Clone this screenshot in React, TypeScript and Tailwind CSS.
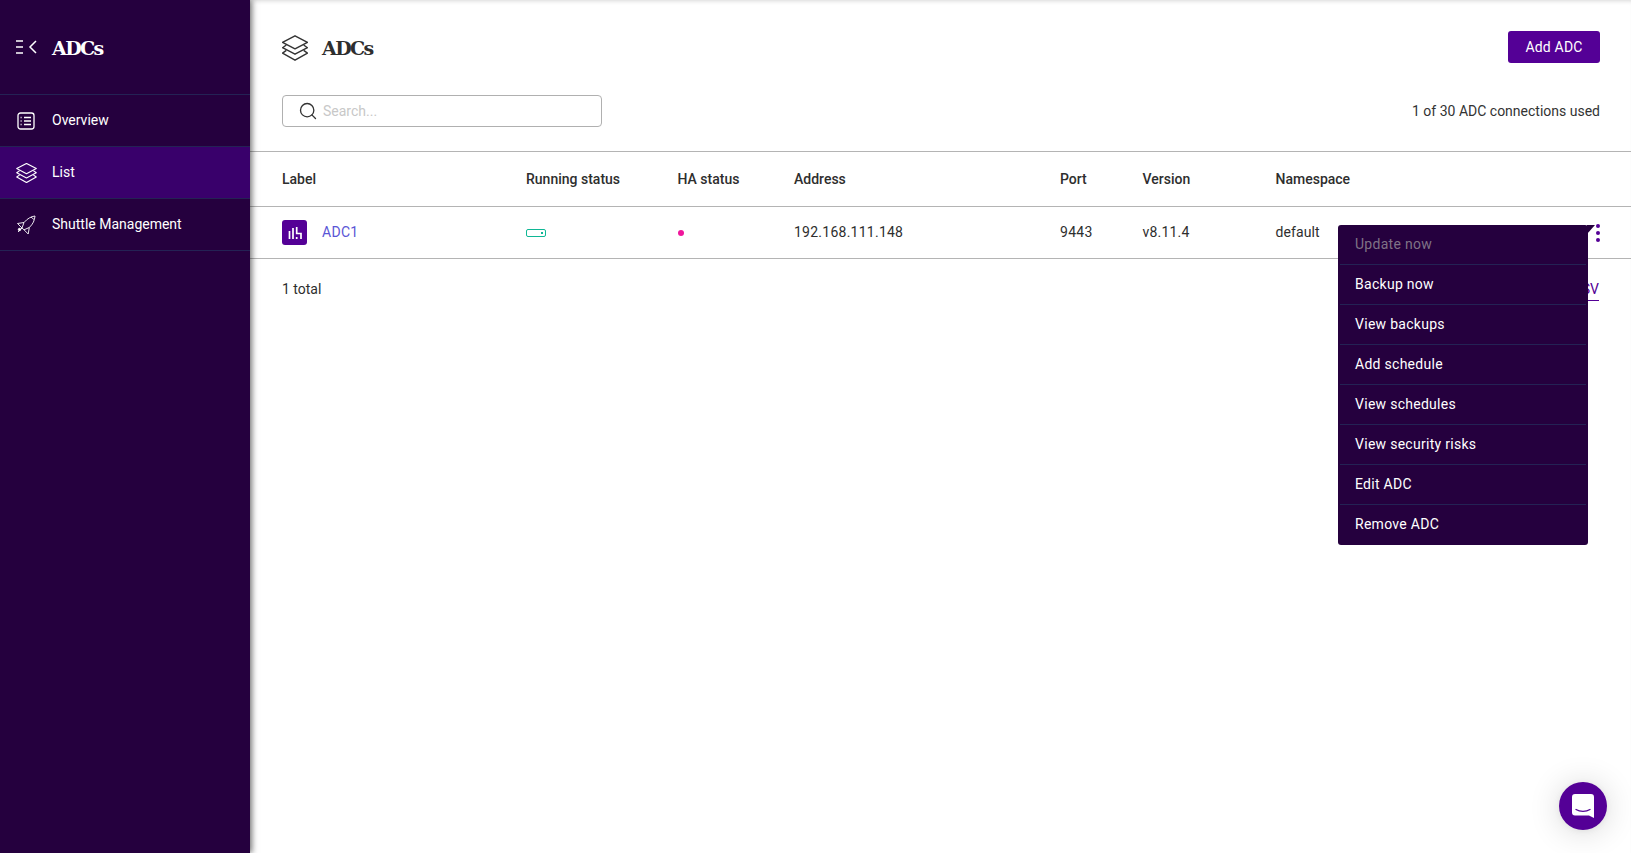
import { Search } from "lucide-react";

const NAV_BORDER = "border-b border-[#242254]";

const MENU_ITEMS = [
  "Update now",
  "Backup now",
  "View backups",
  "Add schedule",
  "View schedules",
  "View security risks",
  "Edit ADC",
  "Remove ADC",
];

function StackIcon({ className }: { className?: string }) {
  return (
    <svg viewBox="1 1 24 23.5" fill="none" stroke="currentColor" strokeWidth="1.3" strokeLinejoin="round" className={className}>
      <path d="M13 1.5 24.5 7.5 13 13.5 1.5 7.5Z" />
      <path d="M5 10 1.5 12.5 13 18.5 24.5 12.5 21 10" />
      <path d="M5 15 1.5 17.5 13 24 24.5 17.5 21 15" />
    </svg>
  );
}

function CollapseIcon() {
  return (
    <svg viewBox="0 0 22 14" fill="none" stroke="currentColor" className="h-[14px] w-[22px] text-white">
      <path d="M0 1h7M0 7h7M0 13h7" strokeWidth="1.4" />
      <path d="M20 1 14 7l6 6" strokeWidth="1.5" />
    </svg>
  );
}

function OverviewIcon() {
  return (
    <svg viewBox="0 0 18 18" fill="none" stroke="currentColor" strokeWidth="1.3" className="h-[18px] w-[18px] text-white">
      <rect x="1" y="1" width="16" height="16" rx="2.5" />
      <path d="M7 5.5h7M7 9h7M7 12.5h7" />
      <path d="M3.6 5.5h1M3.6 9h1M3.6 12.5h1" strokeWidth="1.4" />
    </svg>
  );
}

function ShuttleIcon() {
  return (
    <svg viewBox="0 0 20 20" fill="none" stroke="currentColor" strokeWidth="0.9" strokeLinejoin="round" className="h-[20px] w-[20px] text-white">
      <path d="M19 1C15 1.5 11.5 3.5 8 7.5L6 13l2 1.8 5.3-2.3C17 9 18.6 5.5 19 1Z" />
      <path d="M8 7.5 1.5 8.5 6 13" />
      <path d="M13.3 12.5 12.2 19 8 14.8" />
      <path d="M15 2 18 4.5" />
      <path d="M6 13 2 17" />
      <circle cx="3.5" cy="14.5" r="1.2" fill="currentColor" />
    </svg>
  );
}

function NavItem({ label, icon, active }: { label: string; icon: React.ReactNode; active?: boolean }) {
  return (
    <div className={`flex h-[52px] items-center ${NAV_BORDER} ${active ? "bg-[#39006b]" : ""}`}>
      <div className="flex w-[52px] justify-center">{icon}</div>
      <span className="text-[14px] text-white">{label}</span>
    </div>
  );
}

function Sidebar() {
  return (
    <aside className="relative z-10 h-[853px] w-[250px] shrink-0 bg-[#25003e] shadow-[2px_0_6px_rgba(0,0,0,0.55)]">
      <div className={`flex h-[95px] items-center ${NAV_BORDER}`}>
        <div className="flex w-[52px] justify-center pl-[1px]">
          <CollapseIcon />
        </div>
        <span className="pt-[2px] font-['DejaVu_Serif',serif] text-[19px] leading-none font-bold tracking-[-1.6px] text-white">ADCs</span>
      </div>
      <NavItem label="Overview" icon={<OverviewIcon />} />
      <NavItem label="List" active icon={<StackIcon className="h-[20px] w-[21px] text-white" />} />
      <NavItem label="Shuttle Management" icon={<ShuttleIcon />} />
    </aside>
  );
}

function RowMenu() {
  return (
    <div className="absolute top-[225px] left-[1338px] w-[250px] rounded-[3px] bg-[#25003e] px-[2px] text-[14px] tracking-[0.28px] text-white">
      <div className="absolute top-0 -right-[7px] h-[9px] w-[8px] bg-[#25003e] [clip-path:polygon(0_0,100%_0,0_100%)]" />
      {MENU_ITEMS.map((item, i) => (
        <div
          key={item}
          className={`flex h-[40px] items-center px-[15px] ${i < MENU_ITEMS.length - 1 ? "border-b border-[#242254]" : "pb-[2px]"} ${i === 0 ? "text-[#7f7386]" : ""}`}
        >
          {item}
        </div>
      ))}
    </div>
  );
}

export default function App() {
  return (
    <div className="relative flex h-[853px] w-[1631px] overflow-hidden bg-white font-['Roboto',sans-serif] text-[#2e2e2e]">
      <Sidebar />
      <main className="min-w-0 flex-1 shadow-[inset_0_4px_4px_-3px_rgba(0,0,0,0.16)]">
        <div className="flex h-[95px] items-center justify-between pr-[31px] pl-[32px]">
          <div className="flex items-center gap-[14px]">
            <StackIcon className="h-[26px] w-[26px] text-[#333333]" />
            <h1 className="pt-[1px] font-['DejaVu_Serif',serif] text-[19px] leading-none font-bold tracking-[-1.6px] text-[#2e2e2e]">ADCs</h1>
          </div>
          <button className="mb-[1px] h-[32px] w-[92px] rounded-[3px] bg-[#540096] text-[14px] tracking-[0.2px] text-white">Add ADC</button>
        </div>

        <div className="flex h-[32px] items-center justify-between pr-[31px] pl-[32px]">
          <div className="flex h-[32px] w-[320px] items-center gap-[5px] rounded-[4px] border border-[#b0b0b0] pl-[15px]">
            <Search className="h-[20px] w-[20px] text-[#333333]" strokeWidth={1.6} />
            <span className="text-[14px] text-[#c8c8c8]">Search...</span>
          </div>
          <span className="text-[14px] text-[#333333]">1 of 30 ADC connections used</span>
        </div>

        <div className="mt-[24px] flex h-[56px] items-center border-y border-[#b4b4b4] pl-[32px] text-[14px] font-medium">
          <div className="w-[244px]">Label</div>
          <div className="w-[151.5px]">Running status</div>
          <div className="w-[116.5px]">HA status</div>
          <div className="w-[266px]">Address</div>
          <div className="w-[82.5px]">Port</div>
          <div className="w-[133px]">Version</div>
          <div>Namespace</div>
        </div>

        <div className="flex h-[52px] items-center border-b border-[#b4b4b4] pl-[32px] text-[14px]">
          <div className="flex w-[244px] items-center gap-[15px]">
            <div className="flex h-[25px] w-[25px] items-center justify-center rounded-[3px] bg-[#540096]">
              <svg viewBox="0 0 14 12" fill="none" stroke="white" strokeWidth="1.7" className="h-[12px] w-[14px]">
                <path d="M1.5 4v8M5 1v11M8.7 0v6.5H13V12M8.7 10v2" />
              </svg>
            </div>
            <span className="tracking-[0.3px] text-[#5a55d6]">ADC1</span>
          </div>
          <div className="w-[151.5px]">
            <div className="relative mt-[1px] h-[8px] w-[20px] rounded-[2px] border border-[#10b795]">
              <div className="absolute top-[2px] right-[2px] h-[2px] w-[2px] bg-[#10b795]" />
            </div>
          </div>
          <div className="w-[116.5px]">
            <div className="mt-[1px] h-[6px] w-[6px] rounded-full bg-[#f0169c]" />
          </div>
          <div className="w-[266px] tracking-[0.25px]">192.168.111.148</div>
          <div className="w-[82.5px] tracking-[0.3px]">9443</div>
          <div className="w-[133px] tracking-[0.2px]">v8.11.4</div>
          <div className="flex-1 tracking-[0.1px]">default</div>
          <div className="mr-[31px] flex flex-col gap-[3px]">
            <div className="h-[4px] w-[4px] rounded-full bg-[#540096]" />
            <div className="h-[4px] w-[4px] rounded-full bg-[#540096]" />
            <div className="h-[4px] w-[4px] rounded-full bg-[#540096]" />
          </div>
        </div>

        <div className="flex items-start justify-between pt-[20px] pr-[32px] pl-[32px] text-[14px]">
          <span>1 total</span>
          <span className="border-b border-[#540096] text-[#540096]">Export CSV</span>
        </div>
      </main>

      <RowMenu />

      <div className="absolute top-[782px] left-[1559px] flex h-[48px] w-[48px] items-center justify-center rounded-full bg-[#540096] shadow-[0_1px_6px_rgba(0,0,0,0.06),0_2px_32px_rgba(0,0,0,0.16)]">
        <svg viewBox="0 0 22 24" className="h-[24px] w-[22px]">
          <path fill="white" d="M3 0h16a3 3 0 0 1 3 3v21l-5-2.4H3a3 3 0 0 1-3-3V3a3 3 0 0 1 3-3Z" />
          <path fill="none" stroke="#540096" strokeWidth="1.3" strokeLinecap="round" d="M4 15.5c4 2.4 10 2.4 14 0" />
        </svg>
      </div>
    </div>
  );
}
